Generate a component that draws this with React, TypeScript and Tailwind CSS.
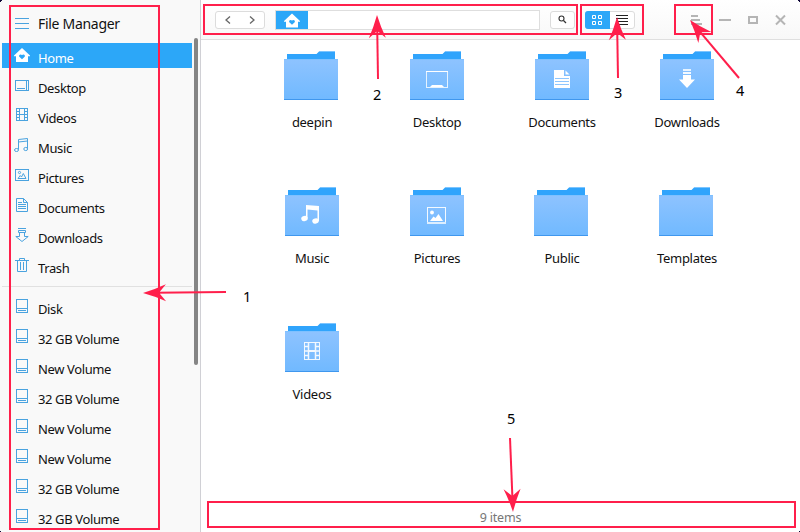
import type { ReactNode } from "react";

const BLUE = "#4aa3df";

type IconName =
  | "home" | "desktop" | "videos" | "music" | "pictures"
  | "documents" | "downloads" | "trash" | "disk";

/* Sidebar glyphs share an 18x22 box whose origin is the row's top edge. */
const sideIcons: Record<IconName, ReactNode> = {
  home: <HomeShape x={1} y={5} />,
  desktop: (
    <g fill="none" stroke={BLUE}>
      <rect x="2.5" y="7.5" width="13" height="10" />
      <path d="M13.5 7.500V17.500M4 15.500H12" />
    </g>
  ),
  videos: (
    <g fill="none" stroke={BLUE}>
      <rect x="3.500" y="5.500" width="11" height="12" />
      <path d="M6.500 5.500V17.500M11.500 5.500V17.500M6.500 11.500H11.500M3.500 8.500H6.500M3.500 11.500H6.500M3.500 14.500H6.500M11.500 8.500H14.500M11.500 11.500H14.500M11.500 14.500H14.500" />
    </g>
  ),
  music: (
    <g fill="none" stroke={BLUE}>
      <path d="M5.500 16.500V6.500L14.500 5.500V15.500M5.500 9L14.500 8" />
      <ellipse cx="3.500" cy="17" rx="2" ry="1.500" />
      <ellipse cx="12.700" cy="16" rx="1.900" ry="1.600" />
    </g>
  ),
  pictures: (
    <g fill="none" stroke={BLUE}>
      <rect x="2.500" y="6.500" width="13" height="11" />
      <circle cx="6.500" cy="9.500" r="1.100" />
      <path d="M5 15.500L7.200 12.500L8.500 14L10.300 10.500L13 15.500Z" />
    </g>
  ),
  documents: (
    <g fill="none" stroke={BLUE}>
      <path d="M10.500 5.500H3.500V18.500H14.500V9.500L10.500 5.500V9.500H14.500M5 9.500H9M5 11.500H13M5 13.500H13M5 15.500H13" />
    </g>
  ),
  downloads: (
    <g fill="none" stroke={BLUE}>
      <path d="M5 5.500H13M5.500 7.500H12.500V9.500H5.500ZM6.500 9.500V13.500H2.800L9 18.500L15.200 13.500H11.500V9.500" />
    </g>
  ),
  trash: (
    <g fill="none" stroke={BLUE}>
      <path d="M2 7.500H16M6.500 7V5.500H11.500V7M4.500 7.500V18.500H13.500V7.500M7.500 9V17M10.500 9V17" />
    </g>
  ),
  disk: (
    <g fill="none" stroke={BLUE}>
      <rect x="3.500" y="5.500" width="11" height="13" />
      <path d="M3.500 14.500H14.500M5 16.500H13" />
    </g>
  ),
};

function HomeShape({ x, y }: { x: number; y: number }) {
  return (
    <g transform={`translate(${x} ${y})`}>
      <path d="M8 0L16 7.500V8.200H14V14H2V8.200H0V7.500Z" fill="#fff" />
      <path d="M8 11.300L5.300 8.700C4.400 7.300 6.300 5.400 8 7.100C9.700 5.400 11.600 7.300 10.700 8.700Z" fill="#2ca7f8" />
    </g>
  );
}

const places: [IconName, string][] = [
  ["home", "Home"],
  ["desktop", "Desktop"],
  ["videos", "Videos"],
  ["music", "Music"],
  ["pictures", "Pictures"],
  ["documents", "Documents"],
  ["downloads", "Downloads"],
  ["trash", "Trash"],
];

const volumes = [
  "Disk", "32 GB Volume", "New Volume", "32 GB Volume",
  "New Volume", "New Volume", "32 GB Volume", "32 GB Volume",
];

function SideRow({ icon, label, active = false }: { icon: IconName; label: string; active?: boolean }) {
  return (
    <li className="h-[30px] w-[190px]">
      <div className={`flex h-[25px] pl-[11px] ${active ? "bg-[#2ca7f8] text-white" : ""}`}>
        <svg width="18" height="22" className="shrink-0">{sideIcons[icon]}</svg>
        <span className="ml-[7px] pt-[5px] text-[13px] leading-5 tracking-[-0.38px] whitespace-nowrap">{label}</span>
      </div>
    </li>
  );
}

/* Folder emblems, positioned inside the 56x50 folder box. */
const emblems: Record<string, ReactNode> = {
  Desktop: (
    <g>
      <rect x="16.500" y="20.500" width="21" height="16" fill="none" stroke="#e4f2ff" />
      <path d="M16 20.500H38" stroke="#fff" />
      <path d="M20 36L22 34H32L34 36Z" fill="#fff" />
    </g>
  ),
  Documents: (
    <g>
      <path d="M19 19H29V25H35V37H19Z" fill="#fff" />
      <path d="M30.500 19.500L34.500 23.500H30.500Z" fill="#fff" />
      <path d="M20 27.500H34M20 30.500H34M20 33.500H34" stroke="#8ec6ff" />
    </g>
  ),
  Downloads: (
    <g fill="#fff">
      <path d="M23 18H31V20H23Z" opacity=".8" />
      <path d="M23 21H31V23H23Z" opacity=".9" />
      <path d="M23 24H31V28.500H35L27 37L19 28.500H23Z" />
    </g>
  ),
  Music: (
    <g fill="#fff">
      <path d="M21 18L34 19V34H32.500V23.500L22.500 22.500V31H21Z" />
      <ellipse cx="19.500" cy="31.500" rx="3.300" ry="2.600" transform="rotate(-15 19.500 31.500)" />
      <ellipse cx="30.500" cy="34" rx="3.300" ry="2.600" transform="rotate(-15 30.500 34)" />
    </g>
  ),
  Pictures: (
    <g>
      <rect x="17.500" y="20.500" width="18" height="15" fill="none" stroke="#f3f9ff" />
      <path d="M17 36H36" stroke="#dceeff" strokeWidth="2" />
      <circle cx="22" cy="25.500" r="1.900" fill="#fff" />
      <path d="M20 34L23.500 29.500L25.500 31L28.500 27L33 34Z" fill="#fff" />
    </g>
  ),
  Videos: (
    <g fill="none" stroke="#fff" opacity=".9">
      <rect x="19.500" y="19.500" width="15" height="17" />
      <path d="M23.500 19V37M30.500 19V37" strokeWidth="1.500" />
      <path d="M23 28H31" strokeWidth="2" />
      <path d="M20 23.500H23M20 28H23M20 32.500H23M31 23.500H34M31 28H34M31 32.500H34" strokeWidth="1.300" />
    </g>
  ),
};

const folders = [
  "deepin", "Desktop", "Documents", "Downloads",
  "Music", "Pictures", "Public", "Templates", "Videos",
];

function Folder({ name }: { name: string }) {
  const emblem = emblems[name];
  return (
    <div className="flex h-[136px] flex-col items-center">
      <svg width="56" height="50" className="shrink-0">
        <g transform={emblem ? "translate(1 0)" : undefined}>
          <path d="M3 9V3H32.500L35 .5H51V9Z" fill="#30a4fc" />
          <path d="M35 .5H51" stroke="#7cc5ff" />
          <rect y="8" width="54" height="41" fill="url(#folder-face)" />
          <path d="M0 8.500H54" stroke="#7fc1ff" />
          <path d="M0 48.500H54" stroke="#3f97ee" />
          {emblem}
        </g>
      </svg>
      <span className="mt-[11px] text-[13px] leading-5 tracking-[-0.3px]">{name}</span>
    </div>
  );
}

function Arrow({ from, to }: { from: [number, number]; to: [number, number] }) {
  const dx = to[0] - from[0];
  const dy = to[1] - from[1];
  const angle = (Math.atan2(dy, dx) * 180) / Math.PI;
  const length = Math.hypot(dx, dy);
  return (
    <g transform={`translate(${to[0]} ${to[1]}) rotate(${angle})`}>
      <path d={`M${-length} 0H-12`} stroke="#ff1f4b" strokeWidth="2" />
      <path d="M0 0Q-12 -3.500 -23 -8.500L-16 0L-23 8.500Q-12 3.500 0 0Z" fill="#ff1f4b" />
    </g>
  );
}

const frames = [
  "left-[9px] top-[5px] h-[525px] w-[151px]",
  "left-[203px] top-[4px] h-[31px] w-[375px]",
  "left-[580px] top-[4px] h-[31px] w-[64px]",
  "left-[674px] top-[4px] h-[31px] w-[39px]",
  "left-[207px] top-[501px] h-[27px] w-[589px]",
];

const callouts = [
  { n: 1, place: "left-[243px] top-[286px]" },
  { n: 2, place: "left-[373px] top-[84px]" },
  { n: 3, place: "left-[614px] top-[82px]" },
  { n: 4, place: "left-[736px] top-[80px]" },
  { n: 5, place: "left-[507px] top-[408px]" },
];

export default function App() {
  return (
    <div className="relative flex h-[532px] w-[800px] overflow-hidden bg-white font-['Noto_Sans','Open_Sans',sans-serif] text-[#111]">
      <aside className="flex w-[201px] shrink-0 border-r border-[#d0d0d5] bg-[#f9f9f9]">
        <div className="w-[192px] pl-[2px]">
          <div className="flex h-[43px] items-start pl-[13px]">
            <svg width="14" height="13" className="mt-[17px]" stroke={BLUE}>
              <path d="M0 1.500H14M0 6.500H14M0 11.500H14" />
            </svg>
            <h1 className="ml-[9px] mt-[14px] text-[14px] leading-5 tracking-[-0.3px] whitespace-nowrap">File Manager</h1>
          </div>
          <ul>
            {places.map(([icon, label], i) => (
              <SideRow key={label} icon={icon} label={label} active={i === 0} />
            ))}
          </ul>
          <div className="mt-[3px] mb-[7px] h-px w-[190px] bg-[#e1e1e1]" />
          <ul>
            {volumes.map((label, i) => (
              <SideRow key={i} icon="disk" label={label} />
            ))}
          </ul>
        </div>
        <div className="ml-[2px] mt-[38px] h-[327px] w-[4px] rounded-full bg-[#858585]" />
      </aside>

      <main className="flex flex-1 flex-col">
        <header className="flex h-10 shrink-0 items-center border-b border-[#dfdfdf] bg-gradient-to-b from-white to-[#f8f8f8] pt-px pl-[14px]">
          <div className="flex h-[18px] w-[50px] items-center justify-around rounded-[3px] border border-[#dcdcdc] bg-white">
            <svg width="8" height="10" fill="none" stroke="#666" strokeWidth="1.300"><path d="M6 1.500L2 5L6 8.500" /></svg>
            <svg width="8" height="10" fill="none" stroke="#666" strokeWidth="1.300"><path d="M2 1.500L6 5L2 8.500" /></svg>
          </div>
          <div className="ml-[10px] flex h-5 w-[265px] border border-[#dedede] bg-white">
            <div className="flex h-[18px] w-8 items-center justify-center bg-[#2ca7f8]">
              <svg width="16" height="15"><HomeShape x={0} y={0.5} /></svg>
            </div>
          </div>
          <div className="ml-[10px] flex h-[18px] w-[25px] items-center justify-center rounded-[3px] border border-[#dcdcdc] bg-white">
            <svg width="9" height="9" className="-mt-px -ml-px" fill="none" stroke="#333"><circle cx="3.500" cy="3.500" r="2.500" strokeWidth="1.100" /><path d="M5.500 5.500L8 8" strokeWidth="1.300" /></svg>
          </div>
          <div className="ml-[10px] flex h-[18px] w-[50px] rounded-[3px] border border-[#dcdcdc] bg-white">
            <div className="-my-px -ml-px flex w-[25px] items-center justify-center rounded-l-[3px] bg-[#2ca7f8] pr-px">
              <svg width="10" height="10" fill="none" stroke="#fff">
                <path d="M.5 .5H3.500V3.500H.5ZM6.500 .5H9.500V3.500H6.500ZM.5 6.500H3.500V9.500H.5ZM6.500 6.500H9.500V9.500H6.500Z" />
              </svg>
            </div>
            <div className="flex flex-1 items-center justify-center">
              <svg width="12" height="10" stroke="#222"><path d="M0 .5H12M0 3.500H12M0 6.500H12M0 9.500H12" /></svg>
            </div>
          </div>
          <svg width="110" height="20" className="ml-[50px]" fill="none" stroke="#b5b5b5" strokeWidth="2">
            <path d="M6 6H13M6 10H15M6 14H17M34 10H46" />
            <rect x="64" y="7" width="8" height="6" />
            <path d="M91 5.500L100 14.500M100 5.500L91 14.500" />
          </svg>
        </header>

        <section className="grid flex-1 grid-cols-[repeat(4,125px)] content-start pl-[48.5px] pt-[11px]">
          {folders.map((name) => <Folder key={name} name={name} />)}
        </section>

        <footer className="h-[30px] shrink-0 pt-[6px] text-center text-[12.500px] leading-5 tracking-[-0.2px] text-[#777]">9 items</footer>
      </main>

      <svg width="0" height="0" className="absolute">
        <linearGradient id="folder-face" x1="0" y1="0" x2="0" y2="1">
          <stop stopColor="#8ec3ff" />
          <stop offset="1" stopColor="#70b9ff" />
        </linearGradient>
      </svg>

      {frames.map((frame) => (
        <div key={frame} className={`absolute border-2 border-[#ff1f4b] ${frame}`} />
      ))}
      <svg width="800" height="532" className="absolute inset-0">
        <Arrow from={[226, 292]} to={[143, 293]} />
        <Arrow from={[378, 79]} to={[377, 15]} />
        <Arrow from={[618, 78]} to={[617, 17]} />
        <Arrow from={[739, 78]} to={[690, 20]} />
        <Arrow from={[510, 438]} to={[513, 512]} />
        <path d="M0 0H2V1H1V2H0ZM798 0H800V2H799V1H798ZM0 531H1V532H0ZM799 531H800V532H799Z" fill="#100838" />
      </svg>
      {callouts.map(({ n, place }) => (
        <span key={n} className={`absolute text-[14.500px] leading-5 text-black ${place}`}>{n}</span>
      ))}
    </div>
  );
}
